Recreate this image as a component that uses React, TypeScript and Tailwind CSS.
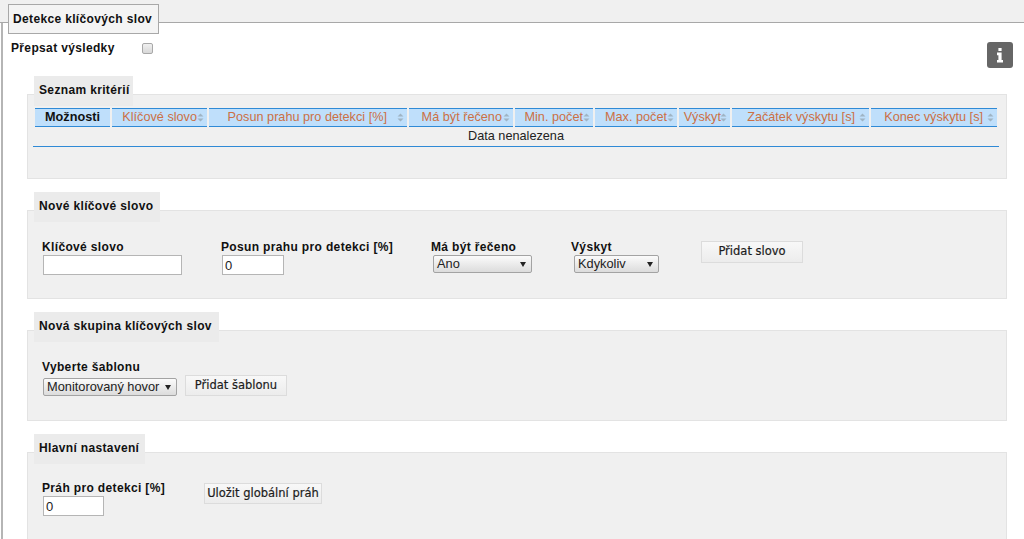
import React from "react";

function Sort() {
  return (
    <svg width="7" height="9" viewBox="0 0 7 9" className="shrink-0">
      <path d="M3.5 0.5 L6.5 3.5 L0.5 3.5 Z M3.5 8.5 L6.5 5.5 L0.5 5.5 Z" fill="#9fb4c4" />
    </svg>
  );
}

function Th({ w, label, gap = "" }: { w: string; label: string; gap?: string }) {
  return (
    <div className={`${w} h-[19px] shrink-0 flex items-center justify-end pr-[3px] bg-[#bfdffb] border-t border-b border-[#2f8ad6] text-[#cc7045] text-[12.7px] leading-none ${gap}`}>
      <span className="whitespace-nowrap">{label}</span>
      <Sort />
    </div>
  );
}

function Section({ title, tabW, h, top, tabH = "h-[30px]", children }: { title: string; tabW: string; h: string; top: string; tabH?: string; children: React.ReactNode }) {
  return (
    <section className={`${top} ml-[24px] w-[980px]`}>
      <div className={`relative z-10 ml-[7px] ${tabW} ${tabH} -mb-[12px] bg-[#ebebeb] flex items-center pl-[5px] pb-[2px] text-[12px] font-bold tracking-[0.35px] text-[#111]`}>
        {title}
      </div>
      <div className={`${h} bg-[#f0f0f0] border border-[#e3e3e3]`}>{children}</div>
    </section>
  );
}

function Label({ children }: { children: React.ReactNode }) {
  return <div className="h-[15px] leading-[15px] text-[12px] font-bold tracking-[0.35px] text-[#111] whitespace-nowrap">{children}</div>;
}

function Input({ w, value = "" }: { w: string; value?: string }) {
  return (
    <input
      readOnly
      value={value}
      className={`${w} h-[20px] ml-px block bg-white border border-[#b5b5b5] px-[2px] text-[13px] text-[#222] outline-none`}
    />
  );
}

function Select({ w, label, ml = "ml-[2px]" }: { w: string; label: string; ml?: string }) {
  return (
    <div className={`${w} ${ml} h-[18px] flex items-center justify-between pl-[3px] pr-[5px] rounded-[2px] border border-[#a3a3a3] bg-gradient-to-b from-[#fbfbfb] to-[#dcdcdc] text-[12.8px] text-[#222] whitespace-nowrap`}>
      <span>{label}</span>
      <svg width="6" height="5" viewBox="0 0 6 5"><path d="M0 0 H6 L3 5 Z" fill="#222" /></svg>
    </div>
  );
}

function Btn({ w, h, children, cls = "" }: { w: string; h: string; children: React.ReactNode; cls?: string }) {
  return (
    <button className={`${w} ${h} ${cls} shrink-0 flex items-center justify-center bg-gradient-to-b from-[#f8f8f8] to-[#ececec] border border-[#dcdcdc] text-[11.5px] text-[#1c1c1c] whitespace-nowrap font-['DejaVu_Sans',sans-serif] [-webkit-text-stroke:0.2px_#1c1c1c]`}>
      {children}
    </button>
  );
}

export default function App() {
  return (
    <div className="w-[1024px] h-[539px] overflow-hidden bg-white relative font-['Liberation_Sans',Arial,sans-serif]">
      <header className="h-[23px] bg-[#f0f0f0] border-b border-[#a8a8a8] pl-[8px] pt-[4px]">
        <div className="relative z-10 w-[151px] h-[30px] bg-[#f4f4f4] border border-[#a8a8a8] flex items-center pl-[4px] text-[12px] font-bold tracking-[0.35px] text-[#111] whitespace-nowrap">
          Detekce klíčových slov
        </div>
      </header>
      <main className="ml-px h-[516px] border-l-2 border-[#b5b5b5]">
        <div className="h-[52px] flex items-start">
          <div className="ml-[8px] mt-[18px] w-[131px] text-[12px] leading-[15px] font-bold tracking-[0.35px] text-[#111]">Přepsat výsledky</div>
          <div className="mt-[20px] w-[11px] h-[11px] rounded-[2px] border border-[#a8a8a8] bg-gradient-to-b from-[#f0f0f0] to-[#d8d8d8]" />
          <div className="ml-auto mt-[19px] mr-[11px] w-[26px] h-[26px] rounded-[3px] bg-[#666] flex items-center justify-center">
            <svg width="8" height="15" viewBox="0 0 8 15">
              <path d="M2.4 0 H5.6 V3 H2.4 Z M1 4.6 H5.6 V12 H7 V14.6 H1 V12 H2.4 V7.2 H1 Z" fill="#fff" />
            </svg>
          </div>
        </div>

        <Section title="Seznam kritérií" tabW="w-[99px]" h="h-[85px]" top="mt-[1px]">
          <div className="ml-[5px] mt-[13px] w-[966px]">
            <div className="flex gap-[2px] ml-[2px]">
              <div className="w-[75px] h-[19px] shrink-0 flex items-center justify-center bg-[#bfdffb] border-t border-b border-[#2f8ad6] text-[12.7px] font-bold text-[#111]">Možnosti</div>
              <Th w="w-[95px]" label="Klíčové slovo" />
              <Th w="w-[198px]" label="Posun prahu pro detekci [%]" gap="[&>span]:mr-[10px]" />
              <Th w="w-[104px]" label="Má být řečeno" gap="[&>span]:mr-px" />
              <Th w="w-[78px]" label="Min. počet" />
              <Th w="w-[82px]" label="Max. počet" />
              <Th w="w-[51px]" label="Výskyt" gap="[&>span]:-mr-[1px]" />
              <Th w="w-[137px]" label="Začátek výskytu [s]" gap="[&>span]:mr-[4px]" />
              <Th w="w-[126px]" label="Konec výskytu [s]" gap="[&>span]:mr-[4px]" />
            </div>
            <div className="h-[20px] pt-px border-b border-[#2f8ad6] flex items-center justify-center text-[12.7px] text-[#222]">Data nenalezena</div>
          </div>
        </Section>

        <Section title="Nové klíčové slovo" tabW="w-[126px]" h="h-[89px]" top="mt-[13px]">
          <div className="flex pl-[14px] pt-[29px]">
            <div className="w-[179px]"><Label>Klíčové slovo</Label><Input w="w-[139px]" /></div>
            <div className="w-[210px]"><Label>Posun prahu pro detekci [%]</Label><Input w="w-[62px]" value="0" /></div>
            <div className="w-[140px]"><Label>Má být řečeno</Label><Select w="w-[99px]" label="Ano" /></div>
            <div className="w-[130px]"><Label>Výskyt</Label><Select w="w-[85px]" ml="ml-[3px]" label="Kdykoliv" /></div>
            <Btn w="w-[102px]" h="h-[22px]" cls="mt-px">Přidat slovo</Btn>
          </div>
        </Section>

        <Section title="Nová skupina klíčových slov" tabW="w-[185px]" h="h-[91px]" top="mt-[13px]">
          <div className="pl-[14px] pt-[29px]">
            <Label>Vyberte šablonu</Label>
            <div className="flex items-start mt-[3px]">
              <Select w="w-[134px]" ml="ml-px" label="Monitorovaný hovor" />
              <Btn w="w-[102px]" h="h-[21px]" cls="ml-[8px] -mt-[3px]">Přidat šablonu</Btn>
            </div>
          </div>
        </Section>

        <Section title="Hlavní nastavení" tabW="w-[111px]" h="h-[100px]" top="mt-[13px]">
          <div className="flex pl-[14px] pt-[28px]">
            <div className="w-[162px]"><Label>Práh pro detekci [%]</Label><Input w="w-[61px]" value="0" /></div>
            <Btn w="w-[118px]" h="h-[21px]" cls="mt-[2px]">Uložit globální práh</Btn>
          </div>
        </Section>
      </main>
    </div>
  );
}
